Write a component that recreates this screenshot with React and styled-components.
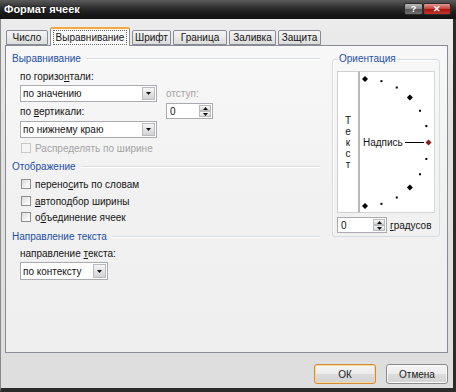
import React from 'react';
import styled, { createGlobalStyle } from 'styled-components';

const Global = createGlobalStyle`
  html, body { margin: 0; padding: 0; background: #fff; }
  body { font-family: "Liberation Sans", Arial, sans-serif; }
  #root { width: 456px; height: 392px; }
`;

const Window = styled.div`
  width: 456px;
  height: 392px;
  display: flex;
  flex-direction: column;
  font-family: "Liberation Sans", Arial, sans-serif;
  font-size: 10px;
  color: #141414;
`;

const TitleBar = styled.div`
  height: 19px;
  flex: none;
  display: flex;
  justify-content: space-between;
  align-items: flex-start;
  padding: 0 5px 0 4px;
  background: linear-gradient(to bottom, #5a5a5a 0%, #303030 40%, #1a1a1a 70%, #121212 100%);
`;

const Title = styled.span`
  color: #fff;
  font-weight: bold;
  font-size: 11px;
  line-height: 19px;
  text-shadow: 0 0 2px #000;
`;

const CaptionButtons = styled.div`
  display: flex;
  margin-top: 3px;
`;

const CaptionButton = styled.span`
  width: ${p => p.$w}px;
  height: 12px;
  box-sizing: border-box;
  border: 1px solid #2a2a2a;
  border-radius: 2px;
  display: flex;
  align-items: center;
  justify-content: center;
  color: #fff;
  font-weight: bold;
  font-size: 9px;
  line-height: 1;
  background: ${p => p.$close
    ? 'linear-gradient(to bottom, #e39a94 0%, #c9473d 45%, #a8160f 55%, #c2362a 100%)'
    : 'linear-gradient(to bottom, #b8b8b8 0%, #8a8a8a 45%, #555 55%, #707070 100%)'};
`;

const Body = styled.div`
  flex: 1;
  display: flex;
  flex-direction: column;
  border-left: 1px solid #8a8a8a;
  border-right: 3px solid #2b2b2b;
  border-bottom: 4px solid #2b2b2b;
  padding: 8px 5px 0 4px;
  background: linear-gradient(to bottom, #ececec 0%, #e2e2e2 30%, #dedede 100%);
`;

const TabRow = styled.div`
  display: flex;
  align-items: flex-end;
  gap: 2px;
  padding-left: 1px;
`;

const Tab = styled.div`
  width: ${p => p.$w}px;
  box-sizing: border-box;
  height: ${p => (p.$active ? 19 : 15)}px;
  margin-bottom: ${p => (p.$active ? -1 : 0)}px;
  display: flex;
  align-items: center;
  justify-content: center;
  border: 1px solid #898c95;
  border-bottom: ${p => (p.$active ? 'none' : '1px solid #898c95')};
  border-top: ${p => (p.$active ? '2px solid #f2a944' : '1px solid #898c95')};
  border-radius: 2px 2px 0 0;
  background: ${p => (p.$active
    ? '#fbfbfb'
    : 'linear-gradient(to bottom, #f5f5f5 0%, #e9e9e9 50%, #dcdcdc 100%)')};
  position: ${p => (p.$active ? 'relative' : 'static')};
  z-index: ${p => (p.$active ? 1 : 'auto')};
  color: #141414;
`;

const TabFocus = styled.span`
  outline: 1px dotted #666;
  padding: 1px 2px;
  line-height: 11px;
`;

const Panel = styled.div`
  height: 308px;
  box-sizing: border-box;
  border: 1px solid #898c95;
  background: linear-gradient(to bottom, #f8f8f8 0%, #f1f1f1 50%, #efefef 100%);
  display: grid;
  grid-template-columns: 308px 108px;
  column-gap: 12px;
  align-items: start;
  padding: 7px 7px 0 6px;
`;

const Column = styled.div`
  display: flex;
  flex-direction: column;
`;

const SectionHeader = styled.div`
  display: flex;
  align-items: center;
  height: 12px;
  line-height: 12px;
  color: #1d4fa6;
  margin-top: ${p => p.$mt || 0}px;
  &::after {
    content: '';
    flex: 1;
    margin-left: 5px;
    border-top: 1px solid #d7dde3;
    border-bottom: 1px solid #fff;
  }
`;

const Label = styled.div`
  height: 12px;
  line-height: 12px;
  margin-top: ${p => p.$mt || 0}px;
  color: ${p => (p.$disabled ? '#a3a3a3' : '#141414')};
  white-space: nowrap;
`;

const Indent = styled.div`
  display: flex;
  flex-direction: column;
  padding-left: 8px;
`;

const AlignRow = styled.div`
  display: flex;
  gap: 9px;
`;

const SideStack = styled.div`
  display: flex;
  flex-direction: column;
  padding-top: 17px;
`;

const SelectBox = styled.div`
  width: ${p => p.$w}px;
  height: ${p => p.$h}px;
  margin-top: ${p => p.$mt || 0}px;
  box-sizing: border-box;
  border: 1px solid #a9abb1;
  background: #fff;
  display: flex;
  align-items: center;
  justify-content: space-between;
  padding: 0 1px 0 2px;
`;

const DropButton = styled.span`
  width: 13px;
  height: calc(100% - 2px);
  box-sizing: border-box;
  border: 1px solid #b9bbbf;
  background: linear-gradient(to bottom, #f6f6f6 0%, #e4e4e4 50%, #d2d2d2 100%);
  display: flex;
  align-items: center;
  justify-content: center;
`;

const SpinBox = styled.div`
  width: ${p => p.$w}px;
  height: ${p => p.$h}px;
  margin-top: ${p => p.$mt || 0}px;
  box-sizing: border-box;
  border: 1px solid #a9abb1;
  background: #fff;
  display: flex;
  align-items: center;
  justify-content: space-between;
  padding: 1px 1px 1px 3px;
`;

const SpinButtons = styled.span`
  width: 12px;
  height: 100%;
  display: flex;
  flex-direction: column;
`;

const SpinHalf = styled.span`
  flex: 1;
  box-sizing: border-box;
  border: 1px solid #b9bbbf;
  background: linear-gradient(to bottom, #f6f6f6, #d8d8d8);
  display: flex;
  align-items: center;
  justify-content: center;
`;

const CheckRow = styled.div`
  display: flex;
  align-items: center;
  height: 14px;
  margin-top: ${p => p.$mt || 0}px;
  padding-left: 9px;
  gap: 4px;
  color: ${p => (p.$disabled ? '#a3a3a3' : '#141414')};
  white-space: nowrap;
`;

const CheckBox = styled.span`
  width: 10px;
  height: 10px;
  flex: none;
  box-sizing: border-box;
  border: 1px solid ${p => (p.$disabled ? '#c9c9c9' : '#8e8f8f')};
  background: ${p => (p.$disabled
    ? '#f4f4f4'
    : 'linear-gradient(135deg, #dcdcdc 0%, #f0f0f0 50%, #fdfdfd 100%)')};
`;

const GroupBox = styled.fieldset`
  margin: 0;
  padding: 6px 4px 3px 4px;
  border: 1px solid #d5dce3;
  border-radius: 3px;
  min-width: 0;
  box-shadow: inset 1px 1px 0 #fff;
`;

const Legend = styled.legend`
  color: #1d4fa6;
  padding: 0 1px;
  margin-left: 1px;
  line-height: 12px;
  height: 12px;
`;

const OrientBox = styled.div`
  display: flex;
  height: 142px;
`;

const VerticalText = styled.div`
  width: 23px;
  box-sizing: border-box;
  border: 1px solid #d0d0d0;
  border-right: 2px solid #b9b9b9;
  background: #fff;
  display: flex;
  flex-direction: column;
  align-items: center;
  justify-content: center;
  line-height: 11px;
`;

const Dial = styled.div`
  width: 75px;
  box-sizing: border-box;
  border: 1px solid #d6d6d6;
  border-left: none;
  background: #fff;
  display: flex;
`;

const DegreeRow = styled.div`
  display: flex;
  align-items: center;
  gap: 3px;
  margin-top: 4px;
`;

const Footer = styled.div`
  display: flex;
  justify-content: flex-end;
  gap: 10px;
  padding-top: 11px;
`;

const Button = styled.div`
  width: 62px;
  height: 20px;
  box-sizing: border-box;
  border-radius: 3px;
  border: 1px solid ${p => (p.$default ? '#d08c3a' : '#8a8a8a')};
  box-shadow: ${p => (p.$default ? 'inset 0 0 0 1px #fbd79b' : 'inset 0 0 0 1px #fafafa')};
  background: linear-gradient(to bottom, #f6f6f6 0%, #ebebeb 48%, #dcdcdc 52%, #d2d2d2 100%);
  display: flex;
  align-items: center;
  justify-content: center;
  color: #1a1a1a;
`;

const Arrow = ({ up }) => (
  <svg width="5" height="3" viewBox="0 0 5 3">
    <path d={up ? 'M0 3 L2.5 0 L5 3 Z' : 'M0 0 L5 0 L2.5 3 Z'} fill="#111" />
  </svg>
);

const Select = ({ w, h, mt, children }) => (
  <SelectBox $w={w} $h={h} $mt={mt}>
    <span>{children}</span>
    <DropButton><Arrow /></DropButton>
  </SelectBox>
);

const Spin = ({ w, h, mt }) => (
  <SpinBox $w={w} $h={h} $mt={mt}>
    <span>0</span>
    <SpinButtons>
      <SpinHalf><Arrow up /></SpinHalf>
      <SpinHalf><Arrow /></SpinHalf>
    </SpinButtons>
  </SpinBox>
);

const DialDrawing = () => {
  const cx = 5, cy = 70.5, r = 63.5;
  const marks = [];
  for (let a = 90; a >= -90; a -= 15) {
    const rad = (a * Math.PI) / 180;
    const x = cx + r * Math.cos(rad);
    const y = cy - r * Math.sin(rad);
    if (a === 0) {
      marks.push(<path key={a} d={`M${x - 3} ${y} L${x} ${y - 3} L${x + 3} ${y} L${x} ${y + 3} Z`} fill="#8b1c1c" />);
    } else if (a % 45 === 0) {
      marks.push(<path key={a} d={`M${x - 3} ${y} L${x} ${y - 3} L${x + 3} ${y} L${x} ${y + 3} Z`} fill="#000" />);
    } else {
      marks.push(<rect key={a} x={x - 1} y={y - 1} width="2" height="2" fill="#000" />);
    }
  }
  return (
    <svg width="74" height="140" viewBox="0 0 74 140">
      {marks}
      <text x="3" y="74" fontSize="10" fontFamily="Liberation Sans, Arial, sans-serif" fill="#141414">Надпись</text>
      <line x1="45" y1="70.5" x2="64" y2="70.5" stroke="#000" strokeWidth="1" />
    </svg>
  );
};

export default function App() {
  return (
    <>
      <Global />
      <Window>
        <TitleBar>
          <Title>Формат ячеек</Title>
          <CaptionButtons>
            <CaptionButton $w={19}>?</CaptionButton>
            <CaptionButton $w={28} $close>✕</CaptionButton>
          </CaptionButtons>
        </TitleBar>
        <Body>
          <TabRow>
            <Tab $w={42}>Число</Tab>
            <Tab $w={80} $active><TabFocus>Выравнивание</TabFocus></Tab>
            <Tab $w={39}>Шрифт</Tab>
            <Tab $w={54}>Граница</Tab>
            <Tab $w={47}>Заливка</Tab>
            <Tab $w={43}>Защита</Tab>
          </TabRow>
          <Panel>
            <Column>
              <SectionHeader>Выравнивание</SectionHeader>
              <Indent>
                <AlignRow>
                  <Column>
                    <Label $mt={6}>по горизо<u>н</u>тали:</Label>
                    <Select w={137} h={17} mt={2}>по значению</Select>
                    <Label $mt={4}>по <u>в</u>ертикали:</Label>
                    <Select w={137} h={17} mt={3}>по нижнему краю</Select>
                  </Column>
                  <SideStack>
                    <Label $mt={6} $disabled>отступ:</Label>
                    <Spin w={47} h={16} mt={3} />
                  </SideStack>
                </AlignRow>
              </Indent>
              <CheckRow $mt={3} $disabled><CheckBox $disabled /><span>Распределять по ширине</span></CheckRow>

              <SectionHeader $mt={6}>Отображение</SectionHeader>
              <CheckRow $mt={4}><CheckBox /><span>перено<u>с</u>ить по словам</span></CheckRow>
              <CheckRow $mt={3}><CheckBox /><span><u>а</u>втоподбор ширины</span></CheckRow>
              <CheckRow $mt={2}><CheckBox /><span>о<u>б</u>ъединение ячеек</span></CheckRow>

              <SectionHeader $mt={7}>Направление текста</SectionHeader>
              <Indent>
                <Label $mt={5}>направление <u>т</u>екста:</Label>
                <Select w={88} h={18} mt={2}>по контексту</Select>
              </Indent>
            </Column>

            <GroupBox>
              <Legend>Ориентация</Legend>
              <OrientBox>
                <VerticalText>
                  <span>Т</span><span>е</span><span>к</span><span>с</span><span>т</span>
                </VerticalText>
                <Dial><DialDrawing /></Dial>
              </OrientBox>
              <DegreeRow>
                <Spin w={50} h={16} />
                <span><u>г</u>радусов</span>
              </DegreeRow>
            </GroupBox>
          </Panel>
          <Footer>
            <Button $default>ОК</Button>
            <Button>Отмена</Button>
          </Footer>
        </Body>
      </Window>
    </>
  );
}
